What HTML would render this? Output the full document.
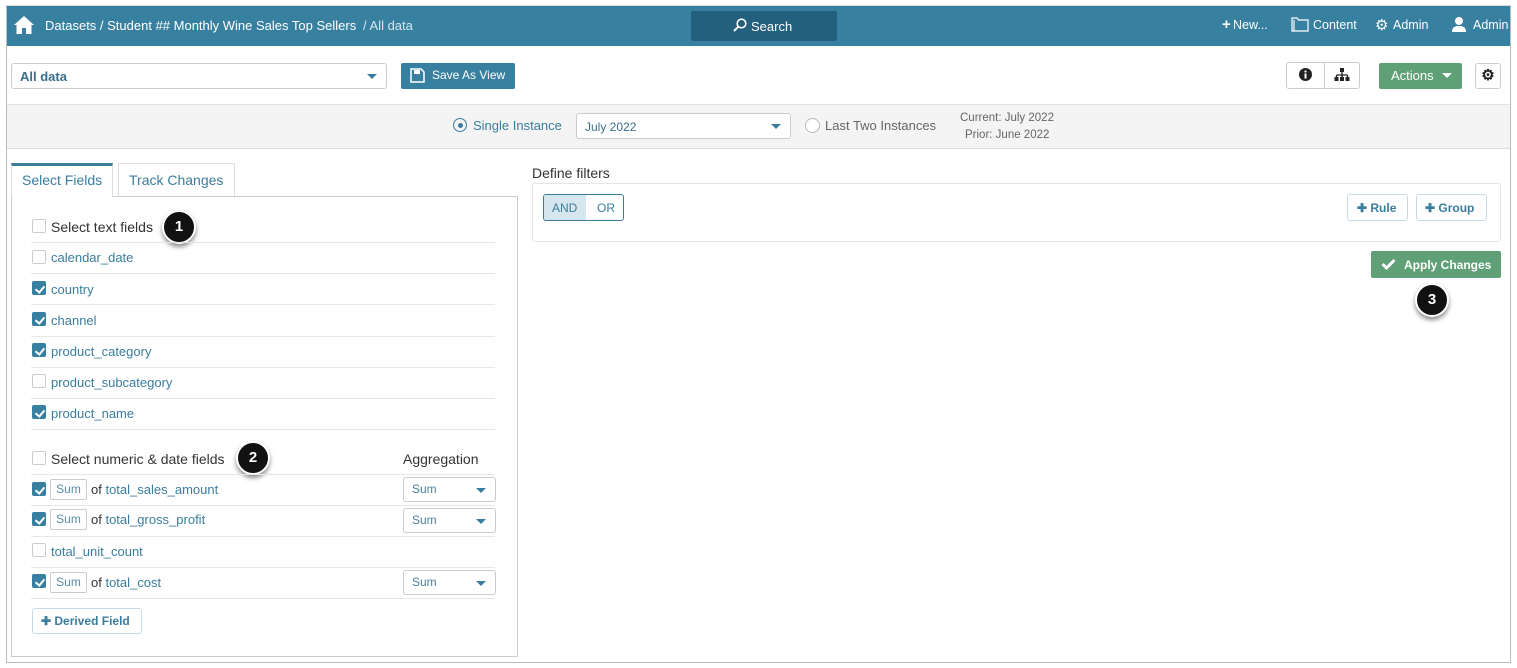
<!DOCTYPE html>
<html><head><meta charset="utf-8"><style>
*{box-sizing:border-box;margin:0;padding:0}
body{width:1517px;height:668px;background:#fff;font-family:"Liberation Sans",sans-serif;font-size:13px;color:#333;position:relative;overflow:hidden}
.a{position:absolute}
.frame{left:6px;top:5px;width:1505px;height:658px;border:1px solid #bbb;border-top-color:#ddd}
.nav{left:7px;top:6px;width:1503px;height:40px;background:#3880a0;color:#fff}
.nav span{position:absolute;top:12px;font-size:13px;white-space:nowrap}
.btn{position:absolute;border:1px solid #ccc;border-radius:3px;background:#fff}
.cb{position:absolute;width:14px;height:14px;border:1px solid #ccc;border-radius:2px;background:#fff}
.cb.on{background:#3880a0;border-color:#3880a0}
.cb.on:after{content:"";position:absolute;left:4px;top:1.5px;width:4px;height:7px;border:solid #fff;border-width:0 2px 2px 0;transform:rotate(40deg)}
.t{position:absolute;white-space:nowrap}
.lnk{color:#3a7d9e}
.sep{position:absolute;left:31px;width:464px;height:1px;background:#e6e6e6}
.sum{position:absolute;left:50px;width:37px;height:21px;border:1px solid #ccc;border-radius:2px;color:#5b8aa3;font-size:12px;text-align:center;line-height:19px}
.sel{position:absolute;left:403px;width:93px;height:25px;border:1px solid #ccc;border-radius:3px;color:#4a7f9b;font-size:12px;line-height:23px;padding-left:8px}
.sel:after,.car:after{content:"";position:absolute;right:9px;top:10px;border:5px solid transparent;border-top:5px solid #3a7d9e;border-bottom:0}
.badge{position:absolute;width:34px;height:34px;border-radius:50%;background:#111;color:#fff;font-weight:bold;font-size:15px;text-align:center;line-height:30px;box-shadow:0 3px 5px rgba(0,0,0,.45);border:2px solid #fff}
</style></head><body>
<div class="a frame"></div>
<div class="a nav">
<svg class="a" style="left:6px;top:9px" width="22" height="20" viewBox="0 0 22 20"><path d="M11 1 L1 10 L3.5 10 L3.5 19 L9 19 L9 13 L13 13 L13 19 L18.5 19 L18.5 10 L21 10 Z" fill="#fff"/></svg>
<span style="left:38px">Datasets / Student ## Monthly Wine Sales Top Sellers</span>
<span style="left:356px;color:#d6e6ee">/ All data</span>
<div class="a" style="left:684px;top:5px;width:146px;height:30px;background:#23607e;border-radius:2px"></div>
<svg class="a" style="left:726px;top:12px" width="14" height="14" viewBox="0 0 14 14"><circle cx="8.5" cy="5.5" r="4.3" stroke="#fff" stroke-width="1.6" fill="none"/><path d="M5.3 8.7 L1 13" stroke="#fff" stroke-width="2"/></svg>
<span style="left:744px;top:13px">Search</span>
<span style="left:1215px;font-weight:bold;font-size:15px;top:10px">+</span><span style="left:1226px;font-size:12.5px">New...</span>
<svg class="a" style="left:1284px;top:11px" width="18" height="15" viewBox="0 0 18 15"><path d="M1 1h5l1.5 2H17v11H1z M3 3v11" stroke="#fff" fill="none" stroke-width="1.2"/></svg>
<span style="left:1306px;font-size:12.5px">Content</span>
<span style="left:1368px;top:10px;font-size:15px">⚙</span><span style="left:1386px;font-size:12.5px">Admin</span>
<svg class="a" style="left:1444px;top:10px" width="16" height="16" viewBox="0 0 16 16"><circle cx="8" cy="5" r="4" fill="#fff"/><path d="M1 16c0-5 3-6 7-6s7 1 7 6z" fill="#fff"/></svg>
<span style="left:1466px;font-size:12.5px">Admin</span>
</div>
<div class="btn car" style="left:11px;top:63px;width:376px;height:26px;"><span class="t" style="left:8px;top:5px;font-weight:bold;color:#3a6f8c">All data</span></div>
<div class="a" style="left:401px;top:63px;width:114px;height:26px;background:#3880a0;border-radius:2px;color:#fff"><svg class="a" style="left:9px;top:5px" width="15" height="15" viewBox="0 0 15 15"><path d="M1 1h10l3 3v10H1z" fill="none" stroke="#fff" stroke-width="1.5"/><rect x="4" y="2" width="6" height="4" fill="#fff"/></svg><span class="t" style="left:31px;top:5px;font-size:12px">Save As View</span></div>
<div class="btn" style="left:1286px;top:62px;width:74px;height:27px"></div>
<div class="a" style="left:1324px;top:62px;width:1px;height:27px;background:#ccc"></div>
<svg class="a" style="left:1299px;top:68px" width="13" height="13" viewBox="0 0 13 13"><circle cx="6.5" cy="6.5" r="6.5" fill="#222"/><rect x="5.5" y="5.5" width="2" height="5" fill="#fff"/><circle cx="6.5" cy="3.5" r="1.1" fill="#fff"/></svg>
<svg class="a" style="left:1334px;top:68px" width="16" height="13" viewBox="0 0 16 13"><rect x="6" y="0" width="4" height="4" fill="#222"/><path d="M8 4v3M2.5 7h11M2.5 7v2M8 7v2M13.5 7v2" stroke="#222" stroke-width="1.3" fill="none"/><rect x="0.5" y="9" width="4" height="4" fill="#222"/><rect x="6" y="9" width="4" height="4" fill="#222"/><rect x="11.5" y="9" width="4" height="4" fill="#222"/></svg>
<div class="a" style="left:1379px;top:63px;width:83px;height:26px;background:#5fa076;border-radius:2px;color:#fff"><span class="t" style="left:12px;top:5px">Actions</span><div class="a" style="left:63px;top:10px;border:5px solid transparent;border-top:5px solid #fff;border-bottom:0"></div></div>
<div class="btn" style="left:1475px;top:63px;width:26px;height:26px;text-align:center;line-height:24px;font-size:15px;color:#222;font-weight:bold">⚙</div>
<div class="a" style="left:7px;top:104px;width:1503px;height:45px;background:#f4f4f4;border-top:1px solid #e2e2e2;border-bottom:1px solid #ddd"></div>
<div class="a" style="left:453px;top:118px;width:14px;height:14px;border:1.5px solid #3a7d9e;border-radius:50%"></div><div class="a" style="left:457.5px;top:122.5px;width:5px;height:5px;background:#3a7d9e;border-radius:50%"></div>
<span class="t lnk" style="left:473px;top:118px">Single Instance</span>
<div class="btn car" style="left:576px;top:113px;width:215px;height:26px"><span class="t" style="left:8px;top:6px;font-size:12px;color:#3a6f8c">July 2022</span></div>
<div class="a" style="left:805px;top:118px;width:15px;height:15px;border:1px solid #bbb;border-radius:50%;background:#fff"></div>
<span class="t" style="left:825px;top:118px;color:#666">Last Two Instances</span>
<span class="t" style="left:960px;top:112px;font-size:11.5px;color:#666">Current: July 2022</span>
<span class="t" style="left:965px;top:129px;font-size:11.5px;color:#666">Prior: June 2022</span>
<div class="a" style="left:11px;top:163px;width:102px;height:34px;background:#fff;border:1px solid #ddd;border-top:3px solid #3a7d9e;border-bottom:none;z-index:2"></div>
<span class="t lnk" style="left:22px;top:172px;font-size:14px;z-index:3">Select Fields</span>
<div class="a" style="left:118px;top:163px;width:117px;height:34px;border:1px solid #ddd;border-bottom:none"></div>
<span class="t lnk" style="left:129px;top:172px;font-size:14px">Track Changes</span>
<div class="a" style="left:11px;top:196px;width:507px;height:461px;border:1px solid #ccc"></div>
<div class="cb" style="left:32px;top:219px"></div><span class="t" style="left:51px;top:219px;font-size:14px">Select text fields</span>
<div class="badge" style="left:162px;top:210px">1</div>
<div class="sep" style="top:242px"></div>
<div class="cb" style="left:32px;top:250px"></div><span class="t lnk" style="left:51px;top:250px">calendar_date</span>
<div class="sep" style="top:273px"></div>
<div class="cb on" style="left:32px;top:281px"></div><span class="t lnk" style="left:51px;top:282px">country</span>
<div class="sep" style="top:304px"></div>
<div class="cb on" style="left:32px;top:312px"></div><span class="t lnk" style="left:51px;top:313px">channel</span>
<div class="sep" style="top:336px"></div>
<div class="cb on" style="left:32px;top:343px"></div><span class="t lnk" style="left:51px;top:344px">product_category</span>
<div class="sep" style="top:367px"></div>
<div class="cb" style="left:32px;top:374px"></div><span class="t lnk" style="left:51px;top:375px">product_subcategory</span>
<div class="sep" style="top:398px"></div>
<div class="cb on" style="left:32px;top:405px"></div><span class="t lnk" style="left:51px;top:406px">product_name</span>
<div class="sep" style="top:429px"></div>
<div class="cb" style="left:32px;top:451px"></div><span class="t" style="left:51px;top:451px;font-size:14px">Select numeric &amp; date fields</span>
<div class="badge" style="left:236px;top:441px">2</div>
<span class="t" style="left:403px;top:451px;font-size:14px">Aggregation</span>
<div class="sep" style="top:474px"></div>
<div class="cb on" style="left:32px;top:482px"></div><div class="sum" style="top:479px">Sum</div><span class="t lnk" style="left:91px;top:482px"><span style="color:#333">of</span> total_sales_amount</span><div class="sel car" style="top:477px">Sum</div>
<div class="sep" style="top:505px"></div>
<div class="cb on" style="left:32px;top:512px"></div><div class="sum" style="top:509px">Sum</div><span class="t lnk" style="left:91px;top:512px"><span style="color:#333">of</span> total_gross_profit</span><div class="sel car" style="top:508px">Sum</div>
<div class="sep" style="top:536px"></div>
<div class="cb" style="left:32px;top:543px"></div><span class="t lnk" style="left:51px;top:544px">total_unit_count</span>
<div class="sep" style="top:567px"></div>
<div class="cb on" style="left:32px;top:574px"></div><div class="sum" style="top:572px">Sum</div><span class="t lnk" style="left:91px;top:575px"><span style="color:#333">of</span> total_cost</span><div class="sel car" style="top:570px">Sum</div>
<div class="sep" style="top:598px"></div>
<div class="btn" style="left:32px;top:608px;width:110px;height:26px;border-color:#c7dbe5"><span class="t lnk" style="left:8px;top:5px;font-size:12px;font-weight:bold">✚ Derived Field</span></div>
<span class="t" style="left:532px;top:165px;font-size:14px">Define filters</span>
<div class="a" style="left:532px;top:183px;width:969px;height:59px;border:1px solid #e5e5e5;border-radius:3px"></div>
<div class="a" style="left:543px;top:194px;width:81px;height:27px;border:1px solid #3a7d9e;border-radius:3px;overflow:hidden"><div class="a" style="left:0;top:0;width:42px;height:25px;background:#d5e6ef"></div><span class="t lnk" style="left:8px;top:6px;font-size:12px">AND</span><span class="t lnk" style="left:53px;top:6px;font-size:12px">OR</span></div>
<div class="btn" style="left:1347px;top:194px;width:61px;height:27px;border-color:#c7dbe5"><span class="t lnk" style="left:9px;top:6px;font-size:12px;font-weight:bold">✚ Rule</span></div>
<div class="btn" style="left:1416px;top:194px;width:71px;height:27px;border-color:#c7dbe5"><span class="t lnk" style="left:8px;top:6px;font-size:12px;font-weight:bold">✚ Group</span></div>
<div class="a" style="left:1371px;top:251px;width:130px;height:27px;background:#5fa076;border-radius:2px;color:#fff"><svg class="a" style="left:10px;top:7px" width="15" height="12" viewBox="0 0 15 12"><path d="M1.5 6 L5.5 10 L13.5 2" stroke="#fff" stroke-width="3" fill="none"/></svg><span class="t" style="left:33px;top:7px;font-size:12px;font-weight:bold">Apply Changes</span></div>
<div class="badge" style="left:1415px;top:283px">3</div>
</body></html>
